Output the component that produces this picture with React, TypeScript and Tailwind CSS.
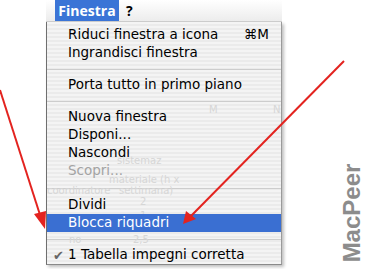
import React from 'react';

type Row = { kind: 'item'; label: string; shortcut?: string; disabled?: boolean; active?: boolean; check?: boolean } | { kind: 'sep'; h?: string };

const rows: Row[] = [
  { kind: 'item', label: 'Riduci finestra a icona', shortcut: '⌘M' },
  { kind: 'item', label: 'Ingrandisci finestra' },
  { kind: 'sep' },
  { kind: 'item', label: 'Porta tutto in primo piano' },
  { kind: 'sep' },
  { kind: 'item', label: 'Nuova finestra' },
  { kind: 'item', label: 'Disponi...' },
  { kind: 'item', label: 'Nascondi' },
  { kind: 'item', label: 'Scopri...', disabled: true },
  { kind: 'sep', h: 'h-[16px]' },
  { kind: 'item', label: 'Dividi' },
  { kind: 'item', label: 'Blocca riquadri', active: true },
  { kind: 'sep' },
  { kind: 'item', label: '1 Tabella impegni corretta', check: true },
];

// faint spreadsheet showing through the translucent menu (coords inside the dropdown)
const ghosts = [
  { t: 'M', x: 162, y: 80 },
  { t: 'N', x: 226, y: 80 },
  { t: 'sistemaz', x: 70, y: 131 },
  { t: 'materiale (h x', x: 62, y: 150 },
  { t: 'coordinatore', x: 0, y: 161 },
  { t: 'settimana)', x: 72, y: 161 },
  { t: '2', x: 93, y: 172 },
  { t: '1', x: 93, y: 186 },
  { t: 'no', x: 22, y: 210 },
  { t: '2,5', x: 86, y: 210 },
];

const App: React.FC = () => {
  return (
    <div className="relative w-[372px] h-[269px] bg-white overflow-hidden font-['DejaVu_Sans',sans-serif] text-black">
      <div className="ml-[46px] w-[236px] flex flex-col">
        {/* Menu bar */}
        <div className="h-[22px] flex items-stretch bg-gradient-to-b from-[#ffffff] to-[#ececec] border-b border-[#cfcfcf]">
          <div className="ml-[9px] w-[64px] flex items-center justify-center bg-[#3a74d6] text-white text-[14px] font-bold font-['Open_Sans',sans-serif]">Finestra</div>
          <div className="pl-[7px] flex items-center text-[14px] font-bold font-['Open_Sans',sans-serif]">?</div>
        </div>

        {/* Dropdown */}
        <div className="relative h-[243px] pt-[4px] border-l border-[#6f6f6f] border-r border-r-[#9a9a9a] border-b border-b-[#8a8a8a] shadow-[2px_2px_3px_rgba(0,0,0,0.25)] bg-[repeating-linear-gradient(180deg,#f4f4f4_0px,#f4f4f4_2px,#ebebeb_2px,#ebebeb_4px)] flex flex-col">
          {ghosts.map((g) => (
            <span
              key={g.t + g.x}
              className="absolute text-[10px] text-[#d6d6d6] pointer-events-none"
              style={{ left: g.x, top: g.y }}
            >
              {g.t}
            </span>
          ))}
          {rows.map((r, i) =>
            r.kind === 'sep' ? (
              <div key={i} className={`${r.h ?? 'h-[14px]'} flex items-center`}>
                <div className="w-full h-px bg-[#cdcdcd]" />
              </div>
            ) : (
              <div
                key={i}
                className={`relative h-[18px] flex items-center pl-[21px] pr-[12px] text-[13.5px] leading-none ${r.active ? 'bg-[#3a6fd2] text-white' : r.disabled ? 'text-[#a3a3a3]' : ''}`}
              >
                {r.check && <span className="absolute left-[6px] text-[13px] text-[#666]">✔</span>}
                <span className="flex-1">{r.label}</span>
                {r.shortcut && <span>{r.shortcut}</span>}
              </div>
            )
          )}
        </div>
      </div>

      {/* Annotation arrows */}
      <svg className="absolute inset-0 pointer-events-none" width="372" height="269" viewBox="0 0 372 269">
        <g stroke="#e3231f" strokeWidth="2" fill="#e3231f">
          <line x1="0" y1="90" x2="41" y2="218" />
          <polygon points="45,229 34,214 46,211" stroke="none" />
          <line x1="344" y1="61" x2="191" y2="216" />
          <polygon points="183,224 186,211 196,219" stroke="none" />
        </g>
      </svg>

      {/* Watermark */}
      <div className="absolute left-[352px] top-[213px] -translate-x-1/2 -translate-y-1/2 -rotate-90 whitespace-nowrap font-['Liberation_Sans',sans-serif] font-bold text-[24px] text-[#8c8c8c]">
        MacPeer
      </div>
    </div>
  );
};

export default App;
